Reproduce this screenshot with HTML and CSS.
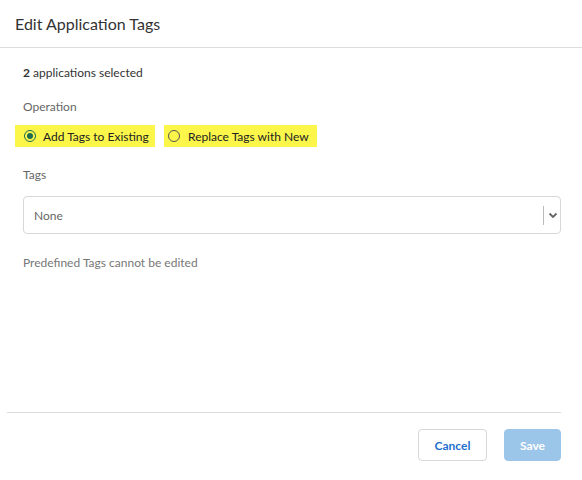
FILE: index.html
```html
<!DOCTYPE html>
<html>
<head>
<meta charset="utf-8">
<link rel="stylesheet" href="styles.css">
</head>
<body>
<div class="modal">
  <div class="header">Edit Application Tags</div>
  <div class="body">
    <div class="count"><b>2</b> applications selected</div>
    <div class="label op-label">Operation</div>
    <div class="radios">
      <label class="radio first"><span class="dot checked"></span>Add Tags to Existing</label>
      <label class="radio second"><span class="dot"></span>Replace Tags with New</label>
    </div>
    <div class="label tags-label">Tags</div>
    <div class="select">
      <span class="placeholder">None</span>
      <span class="sep"></span>
      <svg class="chev" width="10" height="8" viewBox="0 0 10 8"><path d="M1.5 2.5 L5 6 L8.5 2.5" fill="none" stroke="#666" stroke-width="1.8"/></svg>
    </div>
    <div class="hint">Predefined Tags cannot be edited</div>
  </div>
  <div class="footer">
    <button class="btn cancel">Cancel</button>
    <button class="btn save">Save</button>
  </div>
</div>
</body>
</html>
```
FILE: styles.css
```css
html, body { margin: 0; padding: 0; background: #fff; }
body { font-family: Lato, "Noto Sans", sans-serif; color: #333; width: 582px; height: 480px; overflow: hidden; }
.modal { display: flex; flex-direction: column; height: 480px; }
.header { height: 47px; border-bottom: 1px solid #dcdcdc; padding-left: 15px; font-size: 16px; line-height: 47px; color: #333; box-sizing: content-box; }
.body { padding: 18px 21px 0 23px; flex: 1; }
.count { font-size: 12px; line-height: 14px; color: #333; }
.count b { font-weight: 700; }
.label { font-size: 12px; line-height: 14px; color: #666; }
.op-label { margin-top: 20px; }
.radios { display: flex; gap: 9px; margin-top: 11px; margin-left: -8px; }
.radio { display: flex; align-items: center; background: #fcf64a; height: 22px; font-size: 12px; color: #222; white-space: nowrap; box-sizing: border-box; }
.radio.first { width: 140px; padding-left: 9px; }
.radio.second { width: 153px; padding-left: 4px; }
.dot { width: 10px; height: 10px; border: 1px solid #555; border-radius: 50%; margin-right: 8px; box-sizing: content-box; display: inline-block; position: relative; flex: none; }
.radio.first .dot { margin-right: 7px; }
.dot.checked { border-color: #1e6b55; }
.dot.checked::after { content: ""; position: absolute; left: 2px; top: 2px; width: 6px; height: 6px; border-radius: 50%; background: #1e6b55; }
.tags-label { margin-top: 21px; }
.select { margin-top: 14px; height: 36px; border: 1px solid #d7d7d7; border-radius: 4px; display: flex; align-items: center; padding-left: 10px; }
.placeholder { flex: 1; font-size: 12px; color: #666; }
.sep { width: 1px; height: 19px; background: #bbb; margin-right: 4px; }
.chev { margin-right: 2px; }
.hint { margin-top: 21px; font-size: 12px; color: #777; }
.footer { margin: 0 21px 19px 7px; border-top: 1px solid #dcdcdc; padding-top: 16px; display: flex; justify-content: flex-end; gap: 17px; }
.btn { font-family: Lato, "Noto Sans", sans-serif; font-size: 12px; font-weight: 700; height: 32px; border-radius: 4px; padding: 0; }
.cancel { width: 69px; background: #fff; border: 1px solid #d7d7d7; color: #1f6fcc; }
.save { width: 57px; background: #9cc5ea; border: 1px solid #9cc5ea; color: #fff; }
```
